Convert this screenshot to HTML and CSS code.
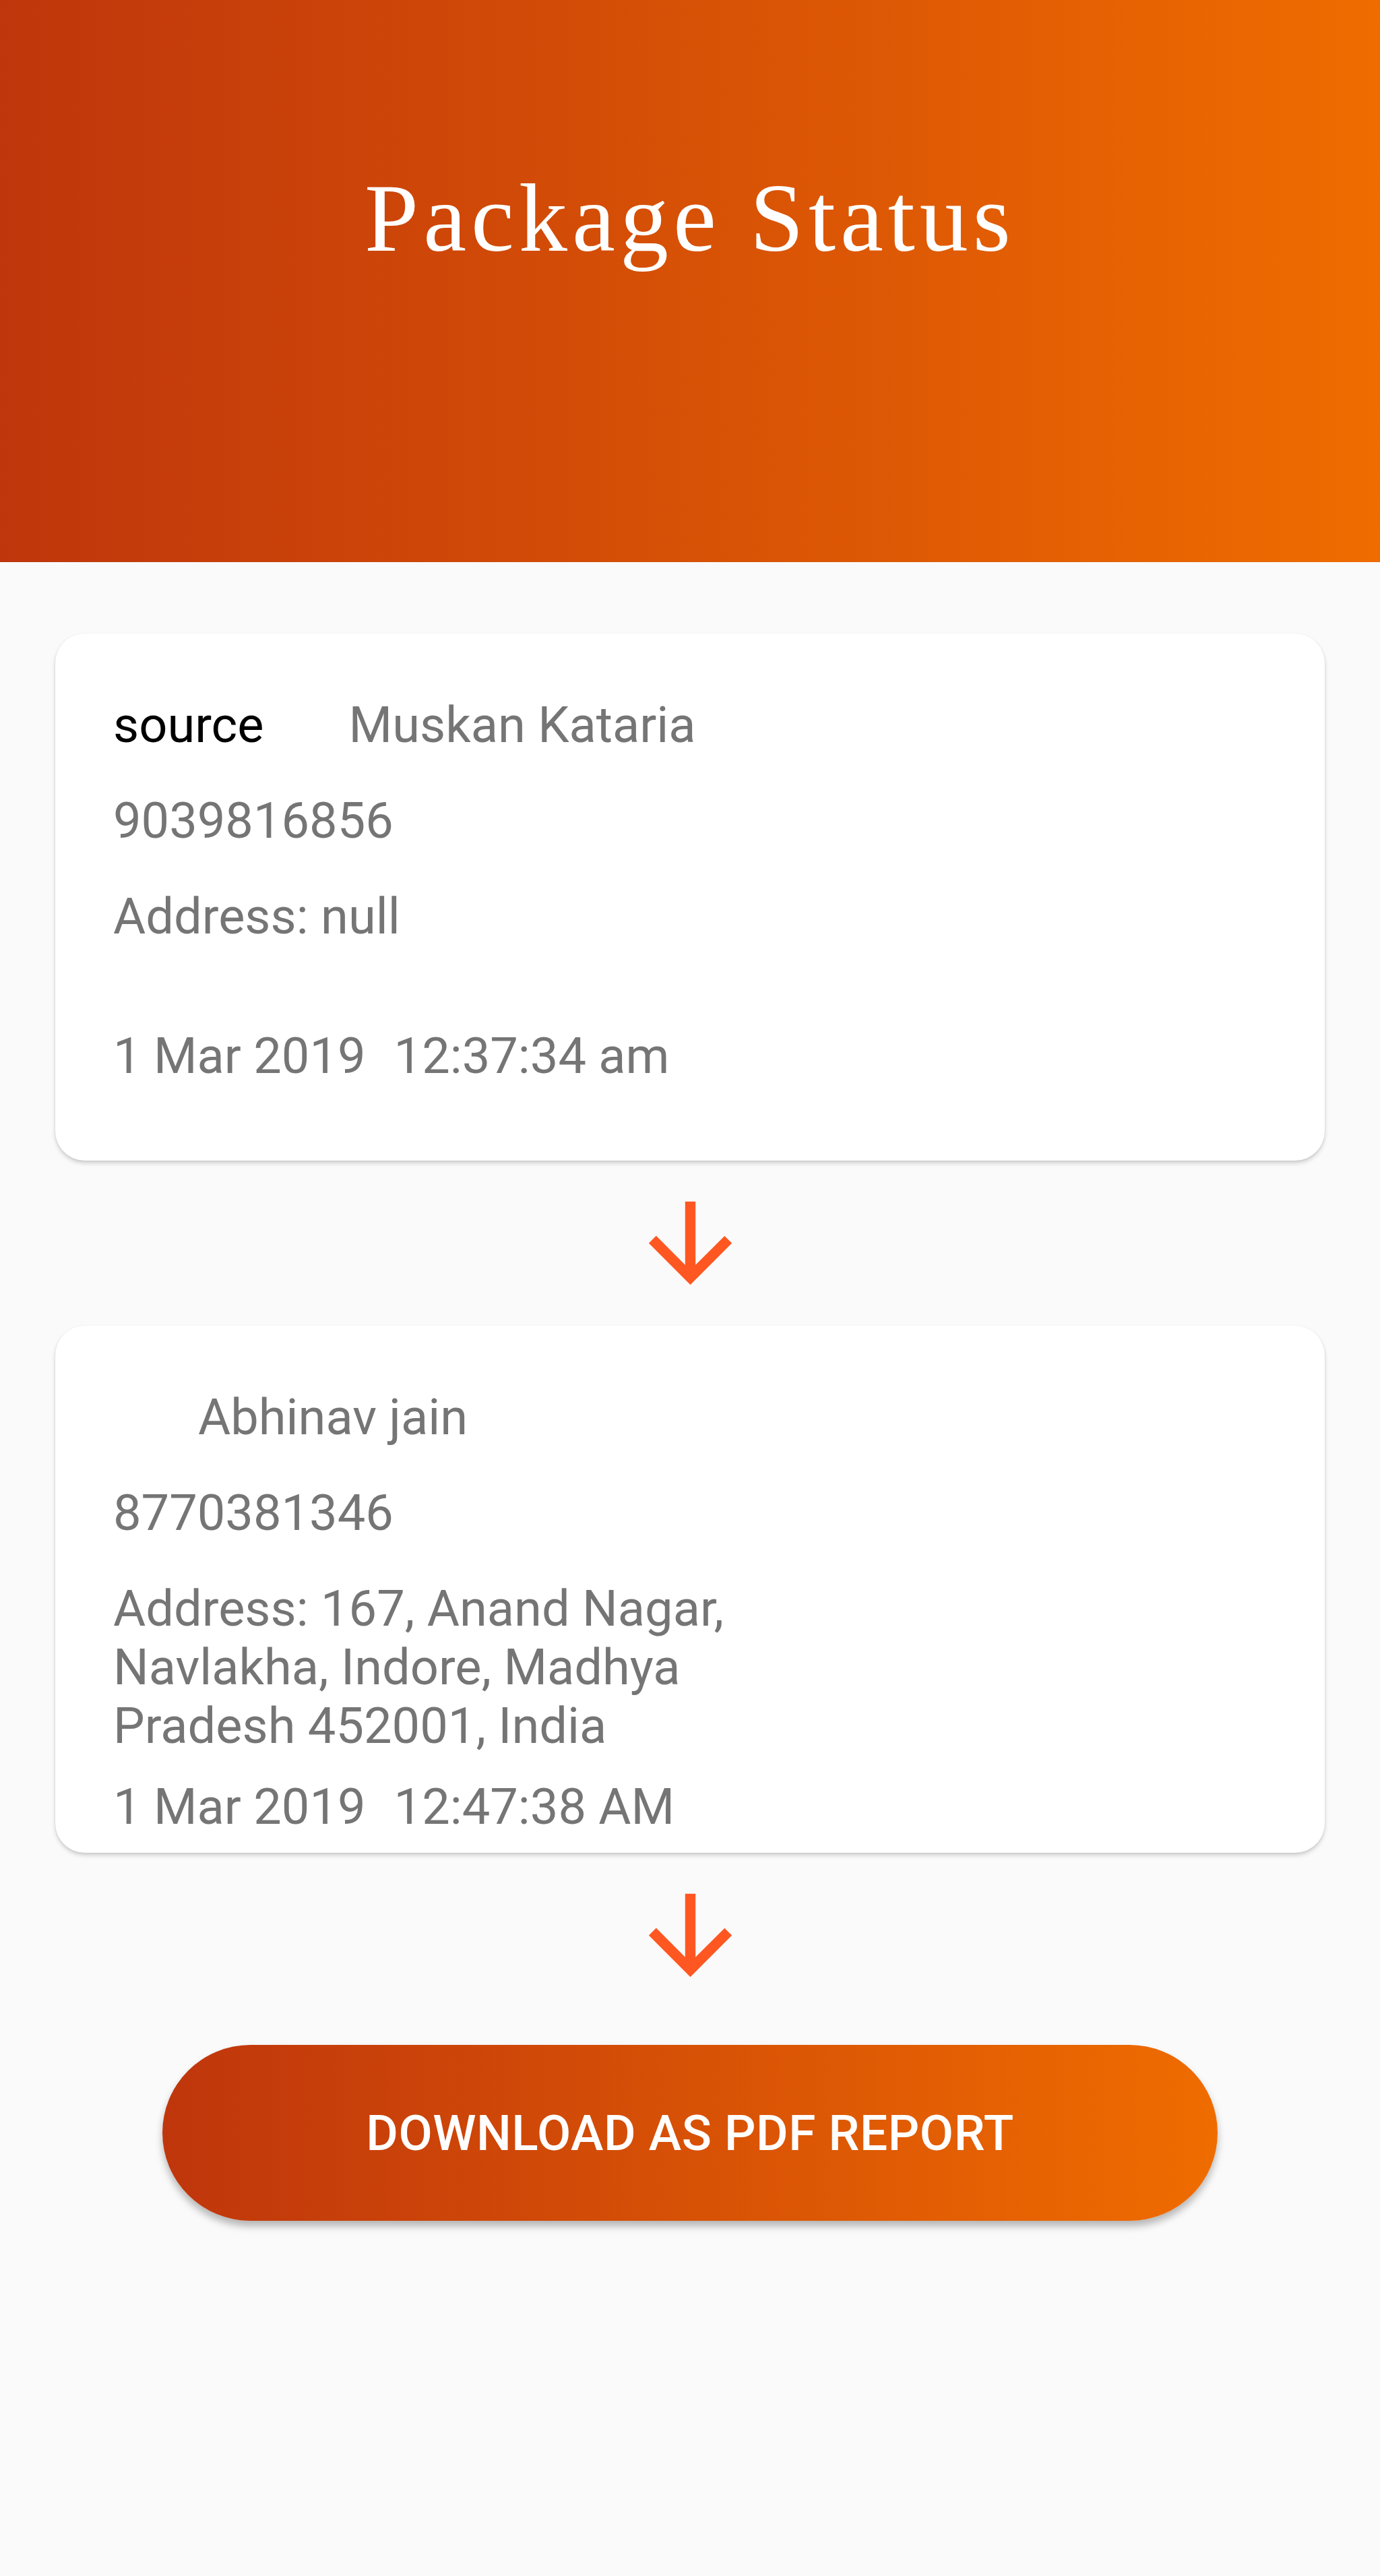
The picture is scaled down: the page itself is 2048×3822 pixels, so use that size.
FILE: index.html
```html
<!DOCTYPE html>
<html lang="en">
<head>
<meta charset="utf-8">
<title>Package Status</title>
<link rel="stylesheet" href="styles.css">
</head>
<body>
<header class="header">
  <h1 class="title">Package Status</h1>
</header>
<main class="content">
  <section class="card">
    <div class="row">
      <span class="label">source</span>
      <span class="name">Muskan Kataria</span>
    </div>
    <div class="phone">9039816856</div>
    <div class="address">Address: null</div>
    <div class="date"><span>1 Mar 2019</span><span class="time">12:37:34 am</span></div>
  </section>
  <div class="arrow">
    <svg viewBox="0 0 24 24" width="185" height="185"><path d="M20 12l-1.41-1.41L13 16.17V4h-2v12.17l-5.58-5.59L4 12l8 8 8-8z" fill="#FF5722"/></svg>
  </div>
  <section class="card">
    <div class="row">
      <span class="label"></span>
      <span class="name">Abhinav jain</span>
    </div>
    <div class="phone">8770381346</div>
    <div class="address">Address: 167, Anand Nagar, Navlakha, Indore, Madhya Pradesh 452001, India</div>
    <div class="date"><span>1 Mar 2019</span><span class="time">12:47:38 AM</span></div>
  </section>
  <div class="arrow">
    <svg viewBox="0 0 24 24" width="185" height="185"><path d="M20 12l-1.41-1.41L13 16.17V4h-2v12.17l-5.58-5.59L4 12l8 8 8-8z" fill="#FF5722"/></svg>
  </div>
  <button class="download">DOWNLOAD AS PDF REPORT</button>
</main>
</body>
</html>
```

FILE: styles.css
```css
html, body {
  margin: 0;
  padding: 0;
  background: #fafafa;
}
body {
  min-height: 3822px;
  font-family: Roboto, "Liberation Sans", sans-serif;
}
.header {
  box-sizing: border-box;
  height: 834px;
  padding-top: 252px;
  background: linear-gradient(to right, #bf360c, #ef6c00);
}
.title {
  margin: 0;
  text-align: center;
  color: #ffffff;
  font-family: "Liberation Serif", serif;
  font-weight: 400;
  font-size: 144px;
  line-height: 144px;
  letter-spacing: 7px;
}
.content {
  padding: 106px 82px 0;
  display: flex;
  flex-direction: column;
}
.card {
  box-sizing: border-box;
  height: 782px;
  overflow: hidden;
  background: #ffffff;
  border-radius: 44px;
  padding: 92px 86px 0;
  box-shadow: 0 4px 6px rgba(0, 0, 0, 0.16), 0 1px 3px rgba(0, 0, 0, 0.08);
  font-size: 74px;
  line-height: 87px;
  color: #757575;
}
.row {
  display: flex;
  height: 87px;
}
.label {
  color: #000000;
}
.name {
  margin-left: 126px;
}
.phone {
  margin-top: 55px;
}
.address {
  margin-top: 55px;
  min-height: 174px;
  width: 960px;
}
.date {
  margin-top: 33px;
}
.time {
  margin-left: 42px;
}
.arrow {
  display: flex;
  justify-content: center;
  margin: 30px 0;
}
.arrow svg {
  display: block;
}
.download {
  align-self: center;
  margin-top: 40px;
  width: 1566px;
  height: 261px;
  border: none;
  border-radius: 131px;
  background: linear-gradient(to right, #bf360c, #ef6c00);
  color: #ffffff;
  font-family: Roboto, "Liberation Sans", sans-serif;
  font-weight: 500;
  font-size: 73px;
  letter-spacing: 0.5px;
  box-shadow: 0 8px 12px rgba(0, 0, 0, 0.28);
  padding: 0;
}
```
